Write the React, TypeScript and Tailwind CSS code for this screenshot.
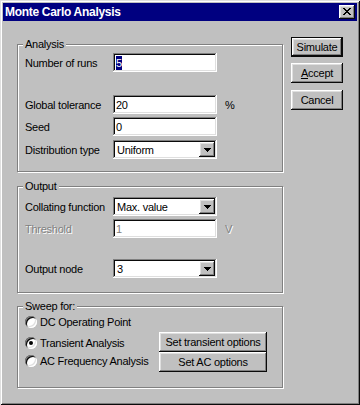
import React from 'react';

// Win95 style bevels
const sunken =
  'shadow-[inset_-1px_-1px_#ffffff,inset_1px_1px_#808080,inset_-2px_-2px_#dfdfdf,inset_2px_2px_#0a0a0a]';
const raised =
  'shadow-[inset_-1px_-1px_#0a0a0a,inset_1px_1px_#ffffff,inset_-2px_-2px_#808080,inset_2px_2px_#dfdfdf]';

const Arrow = () => (
  <svg width="7" height="4" viewBox="0 0 7 4" shapeRendering="crispEdges">
    <path d="M0 0h7v1h-1v1h-1v1h-1v1h-1v-1h-1v-1h-1v-1h-1z" fill="#000" />
  </svg>
);

const Group: React.FC<{ title: string; className?: string; children?: React.ReactNode }> = ({
  title,
  className = '',
  children,
}) => (
  <div className={`relative border border-[#808080] shadow-[inset_1px_1px_#ffffff,1px_1px_#ffffff] ${className}`}>
    <span className="absolute left-[5px] top-[-8px] bg-[#c0c0c0] px-[2px] leading-[14px]">{title}</span>
    {children}
  </div>
);

const Row: React.FC<{ label: string; className?: string; disabled?: boolean; children?: React.ReactNode }> = ({
  label,
  className = '',
  disabled,
  children,
}) => (
  <div className={`flex items-center pl-[7px] ${className}`}>
    <span className={`w-[88px] ${disabled ? 'text-[#808080] [text-shadow:1px_1px_0_#ffffff]' : ''}`}>{label}</span>
    {children}
  </div>
);

const Field: React.FC<{ children?: React.ReactNode; disabled?: boolean }> = ({ children, disabled }) => (
  <div
    className={`h-[19px] w-[104px] bg-white pl-[3px] flex items-center ${sunken} ${disabled ? 'text-[#808080]' : ''}`}
  >
    {children}
  </div>
);

const Combo: React.FC<{ value: string }> = ({ value }) => (
  <div className={`h-[19px] w-[104px] bg-white pl-[4px] flex items-center ${sunken}`}>
    <span className="flex-1">{value}</span>
    <div className={`w-[16px] h-[15px] mr-[2px] bg-[#c0c0c0] flex items-center justify-center ${raised}`}>
      <Arrow />
    </div>
  </div>
);

const Button: React.FC<{ children: React.ReactNode; className?: string; isDefault?: boolean }> = ({
  children,
  className = '',
  isDefault,
}) => (
  <div
    className={`h-[20px] flex items-center justify-center bg-[#c0c0c0] ${
      isDefault
        ? 'shadow-[inset_0_0_0_1px_#0a0a0a,inset_-2px_-2px_#0a0a0a,inset_2px_2px_#ffffff,inset_-3px_-3px_#808080,inset_3px_3px_#dfdfdf]'
        : raised
    } ${className}`}
  >
    {children}
  </div>
);

const Radio: React.FC<{ label: string; checked?: boolean; className?: string }> = ({ label, checked, className = '' }) => (
  <div className={`flex items-center h-[16px] gap-[3px] ${className}`}>
    <div className="w-[12px] h-[12px] rounded-full bg-white flex items-center justify-center shadow-[inset_1px_1px_#808080,inset_-1px_-1px_#ffffff,inset_2px_2px_#0a0a0a,inset_-2px_-2px_#dfdfdf]">
      {checked && <div className="w-[4px] h-[4px] rounded-full bg-black" />}
    </div>
    <span>{label}</span>
  </div>
);

export default function App() {
  return (
    <div className="w-[360px] h-[405px] bg-[#c0c0c0] p-[3px] text-[11px] leading-[14px] tracking-[-0.25px] text-black font-['Liberation_Sans',Arial,sans-serif] shadow-[inset_1px_1px_#dfdfdf,inset_-1px_-1px_#0a0a0a,inset_2px_2px_#ffffff,inset_-2px_-2px_#808080]">
      {/* title bar */}
      <div className="h-[18px] bg-[#000080] flex items-center justify-between pl-[2px] pr-[2px]">
        <span className="text-white font-bold text-[12px] tracking-[-0.3px]">Monte Carlo Analysis</span>
        <div className={`w-[16px] h-[14px] bg-[#c0c0c0] flex items-center justify-center ${raised}`}>
          <svg width="8" height="7" viewBox="0 0 8 7" shapeRendering="crispEdges" className="ml-[-1px] mt-[-1px]">
            <path
              d="M0 0h2v1h-2zM6 0h2v1h-2zM1 1h2v1h-2zM5 1h2v1h-2zM2 2h4v1h-4zM3 3h2v1h-2zM2 4h4v1h-4zM1 5h2v1h-2zM5 5h2v1h-2zM0 6h2v1h-2zM6 6h2v1h-2z"
              fill="#000"
            />
          </svg>
        </div>
      </div>

      <div className="flex pl-[14px]">
        <div className="w-[266px]">
          <Group title="Analysis" className="mt-[23px] h-[128px]">
            <Row label="Number of runs" className="mt-[8px]">
              <Field>
                <span className="bg-[#000080] text-white">5</span>
              </Field>
            </Row>
            <Row label="Global tolerance" className="mt-[23px]">
              <Field>20</Field>
              <span className="ml-[8px]">%</span>
            </Row>
            <Row label="Seed" className="mt-[3px]">
              <Field>0</Field>
            </Row>
            <Row label="Distribution type" className="mt-[4px]">
              <Combo value="Uniform" />
            </Row>
          </Group>

          <Group title="Output" className="mt-[14px] h-[107px]">
            <Row label="Collating function" className="mt-[10px]">
              <Combo value="Max. value" />
            </Row>
            <Row label="Threshold" className="mt-[3px]" disabled>
              <Field disabled>1</Field>
              <span className="ml-[8px] text-[#808080] [text-shadow:1px_1px_0_#ffffff]">V</span>
            </Row>
            <Row label="Output node" className="mt-[21px]">
              <Combo value="3" />
            </Row>
          </Group>

          <Group title="Sweep for:" className="mt-[13px] h-[82px]">
            <div className="flex pl-[7px]">
              <div className="w-[134px]">
                <Radio label="DC Operating Point" className="mt-[7px]" />
                <Radio label="Transient Analysis" className="mt-[5px]" checked />
                <Radio label="AC Frequency Analysis" className="mt-[2px]" />
              </div>
              <div className="w-[108px] mt-[25px]">
                <Button>Set transient options</Button>
                <Button>Set AC options</Button>
              </div>
            </div>
          </Group>
        </div>

        <div className="w-[52px] ml-[8px] mt-[16px]">
          <Button isDefault>Simulate</Button>
          <Button className="mt-[6px]">
            <span>
              <span className="underline">A</span>ccept
            </span>
          </Button>
          <Button className="mt-[7px]">Cancel</Button>
        </div>
      </div>
    </div>
  );
}
